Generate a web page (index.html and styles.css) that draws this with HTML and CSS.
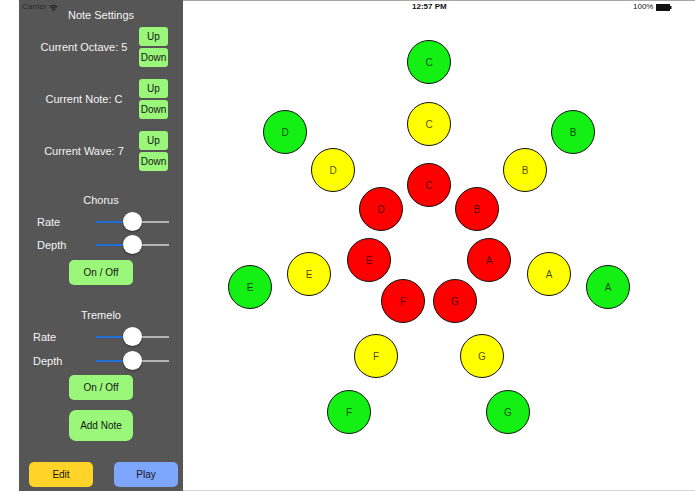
FILE: index.html
```html
<!DOCTYPE html>
<html>
<head>
<meta charset="utf-8">
<link rel="stylesheet" href="styles.css">
</head>
<body>
<div class="screen">
  <div class="gutter"></div>
  <aside class="panel">
    <div class="title">Note Settings</div>
    <div class="stepper first">
      <div class="step-label">Current Octave: 5</div>
      <div class="step-btns"><div class="btn step">Up</div><div class="btn step">Down</div></div>
    </div>
    <div class="stepper">
      <div class="step-label">Current Note: C</div>
      <div class="step-btns"><div class="btn step">Up</div><div class="btn step">Down</div></div>
    </div>
    <div class="stepper">
      <div class="step-label">Current Wave: 7</div>
      <div class="step-btns"><div class="btn step">Up</div><div class="btn step">Down</div></div>
    </div>

    <div class="section-title">Chorus</div>
    <div class="slider-row chorus first-row">
      <div class="slider-label">Rate</div>
      <div class="slider"><div class="track-min"></div><div class="track-max"></div><div class="thumb"></div></div>
    </div>
    <div class="slider-row chorus">
      <div class="slider-label">Depth</div>
      <div class="slider"><div class="track-min"></div><div class="track-max"></div><div class="thumb"></div></div>
    </div>
    <div class="btn toggle toggle-chorus">On / Off</div>

    <div class="section-title tremelo-title">Tremelo</div>
    <div class="slider-row tremelo first-row">
      <div class="slider-label">Rate</div>
      <div class="slider"><div class="track-min"></div><div class="track-max"></div><div class="thumb"></div></div>
    </div>
    <div class="slider-row tremelo second">
      <div class="slider-label">Depth</div>
      <div class="slider"><div class="track-min"></div><div class="track-max"></div><div class="thumb"></div></div>
    </div>
    <div class="btn toggle toggle-tremelo">On / Off</div>
    <div class="btn add-note">Add Note</div>

    <div class="bottom-row">
      <div class="btn edit">Edit</div>
      <div class="btn play">Play</div>
    </div>
  </aside>
  <main class="canvas">
    <div class="note green" style="left:224px;top:39px">C</div>
    <div class="note yellow" style="left:224px;top:101px">C</div>
    <div class="note red" style="left:224px;top:162px">C</div>

    <div class="note red" style="left:176px;top:186px">D</div>
    <div class="note red" style="left:272px;top:186px">B</div>
    <div class="note red" style="left:164px;top:237px">E</div>
    <div class="note red" style="left:284px;top:237px">A</div>
    <div class="note red" style="left:198px;top:278px">F</div>
    <div class="note red" style="left:250px;top:278px">G</div>

    <div class="note yellow" style="left:128px;top:147px">D</div>
    <div class="note yellow" style="left:320px;top:147px">B</div>
    <div class="note yellow" style="left:104px;top:251px">E</div>
    <div class="note yellow" style="left:344px;top:251px">A</div>
    <div class="note yellow" style="left:171px;top:333px">F</div>
    <div class="note yellow" style="left:277px;top:333px">G</div>

    <div class="note green" style="left:80px;top:109px">D</div>
    <div class="note green" style="left:368px;top:109px">B</div>
    <div class="note green" style="left:45px;top:264px">E</div>
    <div class="note green" style="left:403px;top:264px">A</div>
    <div class="note green" style="left:144px;top:389px">F</div>
    <div class="note green" style="left:303px;top:389px">G</div>
  </main>

  <div class="statusbar">
    <div class="carrier">Carrier
      <svg class="wifi" width="9" height="7" viewBox="0 0 9 7">
        <path d="M4.5 7 L0.2 2.6 A6.2 6.2 0 0 1 8.8 2.6 Z" fill="#2a2a2a"/>
        <path d="M1.3 3.7 A4.6 4.6 0 0 1 7.7 3.7" fill="none" stroke="#555" stroke-width="0.7"/>
        <path d="M2.5 4.9 A2.9 2.9 0 0 1 6.5 4.9" fill="none" stroke="#555" stroke-width="0.7"/>
      </svg>
    </div>
    <div class="clock">12:57 PM</div>
    <div class="battery-wrap">100%
      <svg class="battery" width="16" height="7" viewBox="0 0 16 7">
        <rect x="0.5" y="0.5" width="13" height="6" fill="#111" stroke="#111"/>
        <rect x="14" y="2" width="1.5" height="3" fill="#111"/>
      </svg>
    </div>
  </div>
</div>
</body>
</html>
```
FILE: styles.css
```css
html, body {
  margin: 0;
  padding: 0;
  background: #fff;
}
body {
  font-family: "Liberation Sans", Arial, Helvetica, sans-serif;
}
.screen {
  position: relative;
  display: flex;
  width: 695px;
  height: 494px;
  overflow: hidden;
}
.gutter {
  width: 19px;
  flex: none;
}
.panel {
  width: 164px;
  height: 491px;
  flex: none;
  background: #565656;
  color: #f4f4f4;
  display: flex;
  flex-direction: column;
  align-items: center;
  font-size: 11px;
}
.title {
  margin-top: 8px;
  line-height: 14px;
  font-size: 11px;
}
.stepper {
  width: 100%;
  display: flex;
  align-items: center;
  box-sizing: border-box;
  padding-left: 10px;
  margin-top: 12px;
}
.stepper.first {
  margin-top: 5px;
}
.step-label {
  width: 110px;
  text-align: center;
  font-size: 11px;
  line-height: 14px;
}
.step-btns {
  display: flex;
  flex-direction: column;
  gap: 2px;
}
.btn {
  display: flex;
  align-items: center;
  justify-content: center;
  color: #151515;
  font-size: 10px;
  box-sizing: border-box;
}
.step {
  width: 29px;
  height: 19px;
  border-radius: 3px;
  background: #9af77a;
}
.section-title {
  margin-top: 22px;
  line-height: 14px;
  font-size: 11px;
}
.tremelo-title {
  margin-top: 23px;
}
.slider-row {
  width: 100%;
  height: 23px;
  display: grid;
  grid-template-columns: 77px 73px;
  align-items: center;
  box-sizing: border-box;
}
.slider-row.first-row {
  margin-top: 3px;
}
.slider-row.second {
  margin-top: 1px;
}
.slider-label {
  font-size: 11px;
  line-height: 14px;
}
.chorus .slider-label {
  padding-left: 18px;
}
.tremelo .slider-label {
  padding-left: 14px;
}
.slider {
  position: relative;
  height: 23px;
}
.track-min {
  position: absolute;
  left: 0;
  top: 11px;
  width: 37px;
  height: 2px;
  background: #1f6fd6;
}
.track-max {
  position: absolute;
  left: 37px;
  right: 0;
  top: 11px;
  height: 2px;
  background: #b4b4b4;
}
.thumb {
  position: absolute;
  left: 27px;
  top: 2px;
  width: 19px;
  height: 19px;
  border-radius: 50%;
  background: #fff;
  box-shadow: 0 1px 2px rgba(0, 0, 0, 0.45);
}
.toggle {
  width: 64px;
  height: 25px;
  border-radius: 5px;
  background: #9af77a;
}
.toggle-chorus {
  margin-top: 4px;
}
.toggle-tremelo {
  margin-top: 3px;
}
.add-note {
  margin-top: 10px;
  width: 64px;
  height: 31px;
  border-radius: 7px;
  background: #9af77a;
}
.bottom-row {
  margin-top: auto;
  margin-bottom: 4px;
  width: 100%;
  box-sizing: border-box;
  padding-left: 10px;
  display: flex;
  gap: 21px;
}
.edit, .play {
  width: 64px;
  height: 25px;
  border-radius: 5px;
}
.edit {
  background: #ffd327;
}
.play {
  background: #7fa6fd;
}
.canvas {
  flex: 1;
  position: relative;
  height: 491px;
  border-top: 1px solid #a8a8a8;
  border-bottom: 1px solid #d8d8d8;
  box-sizing: border-box;
}
.note {
  position: absolute;
  width: 44px;
  height: 44px;
  box-sizing: border-box;
  border: 1.5px solid #111;
  border-radius: 50%;
  display: flex;
  align-items: center;
  justify-content: center;
  font-size: 10px;
  color: rgba(0, 0, 0, 0.72);
}
.green {
  background: #14f014;
}
.yellow {
  background: #ffff00;
}
.red {
  background: #ff0000;
}
.statusbar {
  position: absolute;
  left: 0;
  top: 0;
  width: 695px;
  height: 14px;
  font-size: 8px;
  color: #2a2a2a;
}
.carrier {
  position: absolute;
  left: 22px;
  top: 2px;
  display: flex;
  align-items: center;
  gap: 3px;
  line-height: 10px;
}
.clock {
  position: absolute;
  left: 412px;
  top: 2px;
  font-weight: bold;
  line-height: 10px;
  color: #111;
}
.battery-wrap {
  position: absolute;
  left: 633px;
  top: 2px;
  display: flex;
  align-items: center;
  gap: 3px;
  line-height: 10px;
  color: #111;
}
```
